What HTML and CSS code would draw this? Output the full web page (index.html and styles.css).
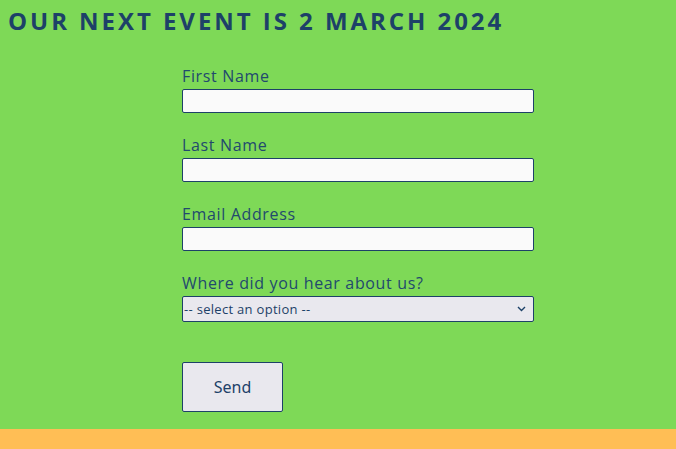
FILE: index.html
```html
<!DOCTYPE html>
<html lang="en">
<head>
<meta charset="utf-8">
<title>Event</title>
<link rel="stylesheet" href="styles.css">
</head>
<body>
<main class="page">
  <h1 class="title">OUR NEXT EVENT IS 2 MARCH 2024</h1>
  <form class="form">
    <div class="field">
      <label class="label" for="fn">First Name</label>
      <input class="input" id="fn" type="text">
    </div>
    <div class="field">
      <label class="label" for="ln">Last Name</label>
      <input class="input" id="ln" type="text">
    </div>
    <div class="field">
      <label class="label" for="em">Email Address</label>
      <input class="input" id="em" type="email">
    </div>
    <div class="field">
      <label class="label" for="src">Where did you hear about us?</label>
      <div class="select-wrap">
        <select class="select" id="src">
          <option>-- select an option --</option>
        </select>
        <svg class="chev" width="9" height="6" viewBox="0 0 9 6" aria-hidden="true">
          <path d="M1 1 L4.5 4.5 L8 1" fill="none" stroke="#1d4168" stroke-width="1.4"/>
        </svg>
      </div>
    </div>
    <button class="send" type="button">Send</button>
  </form>
</main>
<footer class="footer"></footer>
</body>
</html>
```

FILE: styles.css
```css
html, body {
  margin: 0;
  padding: 0;
  background: #7ed957;
  height: 100%;
  overflow: hidden;
}
body {
  font-family: "Open Sans", "Liberation Sans", sans-serif;
  color: #1d4168;
}
.page {
  display: flex;
  flex-direction: column;
}
.title {
  margin: 0;
  padding: 6px 8px 0;
  font-size: 24px;
  line-height: 30px;
  font-weight: 700;
  letter-spacing: 2.95px;
  color: #1d4168;
}
.form {
  margin: 30px 0 0 182px;
  width: 352px;
  display: flex;
  flex-direction: column;
}
.field {
  display: flex;
  flex-direction: column;
  margin-bottom: 22px;
}
.label {
  font-size: 16px;
  line-height: 20px;
  margin-bottom: 3px;
  letter-spacing: 0.65px;
  color: #22496e;
}
.input {
  box-sizing: border-box;
  width: 352px;
  height: 24px;
  margin: 0;
  border: 1px solid #1d4168;
  border-radius: 2px;
  background: #fafafa;
}
.select-wrap {
  position: relative;
  width: 352px;
  height: 26px;
}
.select {
  -webkit-appearance: none;
  appearance: none;
  box-sizing: border-box;
  width: 352px;
  height: 26px;
  margin: 0;
  padding: 0 0 0 1px;
  border: 1px solid #1d4168;
  border-radius: 2px;
  background: #e9e8ee;
  color: #1d4168;
  font-family: "Open Sans", sans-serif;
  font-size: 13px;
  letter-spacing: 0.3px;
}
.chev {
  position: absolute;
  right: 8px;
  top: 10px;
  pointer-events: none;
}
.send {
  margin-top: 18px;
  width: 101px;
  height: 50px;
  box-sizing: border-box;
  border: 1px solid #1d4168;
  border-radius: 2px;
  background: #e9e8ee;
  color: #1d4168;
  font-family: "Noto Sans", sans-serif;
  font-size: 16px;
}
.footer {
  margin-top: 17px;
  height: 20px;
  background: #ffbe55;
}
```
